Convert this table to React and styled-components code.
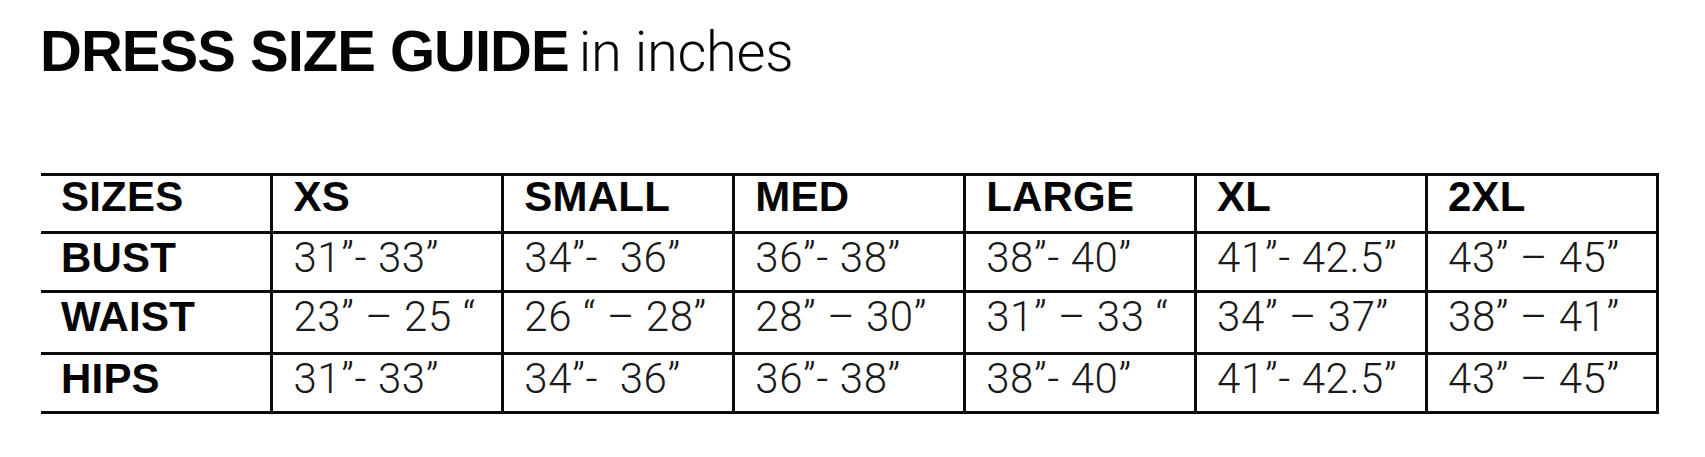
import React from "react";
import styled, { createGlobalStyle } from "styled-components";

const GlobalStyle = createGlobalStyle`
  body {
    margin: 0;
    background: #ffffff;
    color: #0a0a0a;
  }
`;

const Page = styled.div`
  width: 1705px;
  height: 457px;
  padding: 22px 0 0 40px;
  box-sizing: border-box;
  background: #ffffff;
`;

const Title = styled.h1`
  margin: 0;
  font-family: "Liberation Sans", Arial, sans-serif;
  font-weight: 700;
  font-size: 58px;
  line-height: 1;
  letter-spacing: -1px;
  color: #050505;
`;

const TitleLight = styled.span`
  font-family: Roboto, "Liberation Sans", sans-serif;
  font-weight: 300;
  font-size: 56px;
  letter-spacing: -0.3px;
  margin-left: 10px;
`;

const Table = styled.table`
  margin-top: 93px;
  margin-left: 1px;
  border-collapse: collapse;
  table-layout: fixed;
  width: 1618px;
`;

const Row = styled.tr`
  height: ${(p) => p.$h}px;
`;

const Cell = styled.td`
  border-top: 3px solid #0c0c0c;
  border-bottom: 3px solid #0c0c0c;
  border-left: 3px solid #0c0c0c;
  padding: ${(p) => (p.$top ? "0" : "3px")} 0 0 20px;
  vertical-align: top;
  line-height: 1;
  white-space: pre;
  font-size: 42px;
  &:first-child {
    border-left: none;
  }
  &:last-child {
    border-right: 3px solid #0c0c0c;
  }
`;

const HeadCell = styled(Cell)`
  font-family: "Liberation Sans", Arial, sans-serif;
  font-weight: 700;
  font-size: 42px;
  letter-spacing: 0.2px;
  color: #050505;
`;

const ValueCell = styled(Cell)`
  font-family: Roboto, "Liberation Sans", sans-serif;
  font-weight: 300;
  letter-spacing: 0.6px;
  color: #1a1a1a;
`;

const sizes = ["XS", "SMALL", "MED", "LARGE", "XL", "2XL"];

const rows = [
  {
    label: "BUST",
    h: 59,
    values: ["31\u201d- 33\u201d", "34\u201d-  36\u201d", "36\u201d- 38\u201d", "38\u201d- 40\u201d", "41\u201d- 42.5\u201d", "43\u201d \u2013 45\u201d"],
  },
  {
    label: "WAIST",
    h: 62,
    values: ["23\u201d \u2013 25 \u201c", "26 \u201c \u2013 28\u201d", "28\u201d \u2013 30\u201d", "31\u201d \u2013 33 \u201c", "34\u201d \u2013 37\u201d", "38\u201d \u2013 41\u201d"],
  },
  {
    label: "HIPS",
    h: 59,
    values: ["31\u201d- 33\u201d", "34\u201d-  36\u201d", "36\u201d- 38\u201d", "38\u201d- 40\u201d", "41\u201d- 42.5\u201d", "43\u201d \u2013 45\u201d"],
  },
];

const App = () => {
  return (
    <Page>
      <GlobalStyle />
      <Title>
        DRESS SIZE GUIDE<TitleLight>in inches</TitleLight>
      </Title>
      <Table>
        <tbody>
          <Row $h={58}>
            <HeadCell $top>SIZES</HeadCell>
            {sizes.map((s) => (
              <HeadCell key={s} $top>
                {s}
              </HeadCell>
            ))}
          </Row>
          {rows.map((r) => (
            <Row key={r.label} $h={r.h}>
              <HeadCell>{r.label}</HeadCell>
              {r.values.map((v, i) => (
                <ValueCell key={i}>{v}</ValueCell>
              ))}
            </Row>
          ))}
        </tbody>
      </Table>
    </Page>
  );
};

export default App;
